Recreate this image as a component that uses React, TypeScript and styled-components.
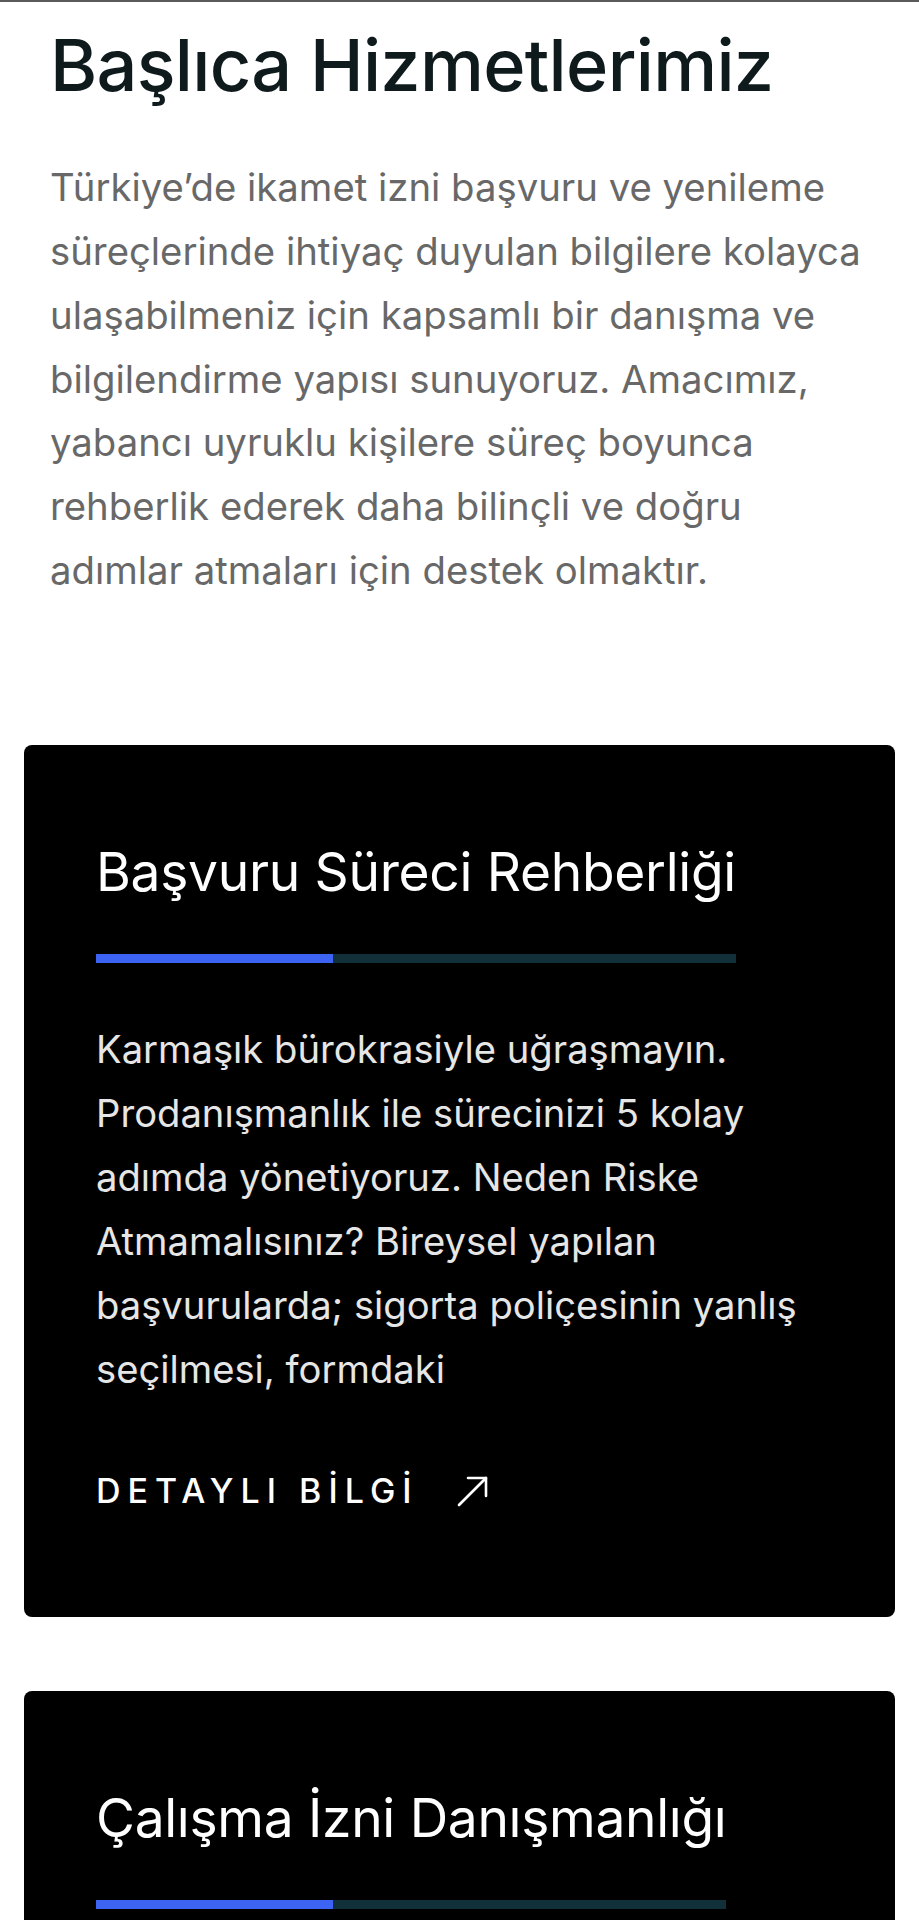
import React from "react";
import styled, { createGlobalStyle } from "styled-components";

const Global = createGlobalStyle`
  html, body { margin: 0; padding: 0; background: #ffffff; }
  body { font-family: Inter, "Noto Sans", sans-serif; -webkit-font-smoothing: antialiased; }
  * { box-sizing: border-box; }
`;

const Page = styled.main`
  border-top: 2px solid #5a5a5a;
  padding: 20px 24px 0 24px;
  display: flex;
  flex-direction: column;
`;

const Intro = styled.section`
  padding: 0 26px 0 26px;
  display: flex;
  flex-direction: column;
`;

const Heading = styled.h1`
  margin: 0;
  font-family: Inter, sans-serif;
  font-weight: 500;
  font-size: 72px;
  line-height: 1.2;
  letter-spacing: -0.7px;
  color: #0e1a1c;
`;

const Lead = styled.p`
  margin: 48px 0 0 0;
  font-family: Inter, sans-serif;
  font-size: 38.3px;
  line-height: 63.7px;
  color: #686868;
  font-weight: 400;
`;

const Cards = styled.div`
  margin-top: 143px;
  display: flex;
  flex-direction: column;
  gap: 74px;
`;

const Card = styled.article`
  background: #000000;
  border-radius: 8px;
  padding: 95px 72px 106px 72px;
  display: flex;
  flex-direction: column;
  align-items: flex-start;
`;

const TitleBlock = styled.div`
  display: inline-flex;
  flex-direction: column;
  gap: 50px;
`;

const CardTitle = styled.h2`
  margin: 0;
  font-family: Inter, sans-serif;
  font-weight: 400;
  font-size: 53.3px;
  line-height: 1.2;
  letter-spacing: -0.3px;
  color: #ffffff;
  white-space: nowrap;
`;

const Bar = styled.div`
  height: 9px;
  width: 100%;
  background: #12303a;
  display: flex;
`;

const BarFill = styled.div`
  width: 237px;
  height: 100%;
  background: #3c63f2;
`;

const CardText = styled.p`
  margin: 54px 0 0 0;
  font-family: Inter, sans-serif;
  font-size: 38.2px;
  line-height: 64px;
  color: #e6e6e6;
`;

const More = styled.a`
  margin-top: 70px;
  display: inline-flex;
  align-items: center;
  gap: 38px;
  font-family: Inter, sans-serif;
  font-weight: 500;
  font-size: 34px;
  line-height: 40px;
  letter-spacing: 7px;
  color: #ffffff;
  text-decoration: none;
`;

const Arrow = () => (
  <svg width="31" height="31" viewBox="0 0 31 31" fill="none" stroke="#ffffff" strokeWidth="2.6" strokeLinecap="round" strokeLinejoin="round">
    <path d="M2 29 L29 2" />
    <path d="M11 2 H29 V20" />
  </svg>
);

const cards = [
  {
    title: "Başvuru Süreci Rehberliği",
    text: "Karmaşık bürokrasiyle uğraşmayın. Prodanışmanlık ile sürecinizi 5 kolay adımda yönetiyoruz. Neden Riske Atmamalısınız? Bireysel yapılan başvurularda; sigorta poliçesinin yanlış seçilmesi, formdaki",
  },
  {
    title: "Çalışma İzni Danışmanlığı",
    text: "Yabancı personel istihdamı ve çalışma izni başvurularında işverenlere ve çalışanlara profesyonel destek sağlıyoruz. Gerekli belgelerin hazırlanması, başvurunun takibi ve",
  },
];

export default function App() {
  return (
    <>
      <Global />
      <Page>
        <Intro>
          <Heading>Başlıca Hizmetlerimiz</Heading>
          <Lead>
            Türkiye’de ikamet izni başvuru ve yenileme süreçlerinde ihtiyaç duyulan bilgilere kolayca ulaşabilmeniz için kapsamlı bir danışma ve bilgilendirme yapısı sunuyoruz. Amacımız, yabancı uyruklu kişilere süreç boyunca rehberlik ederek daha bilinçli ve doğru adımlar atmaları için destek olmaktır.
          </Lead>
        </Intro>
        <Cards>
          {cards.map((c) => (
            <Card key={c.title}>
              <TitleBlock>
                <CardTitle>{c.title}</CardTitle>
                <Bar>
                  <BarFill />
                </Bar>
              </TitleBlock>
              <CardText>{c.text}</CardText>
              <More href="#">
                DETAYLI BİLGİ
                <Arrow />
              </More>
            </Card>
          ))}
        </Cards>
      </Page>
    </>
  );
}
